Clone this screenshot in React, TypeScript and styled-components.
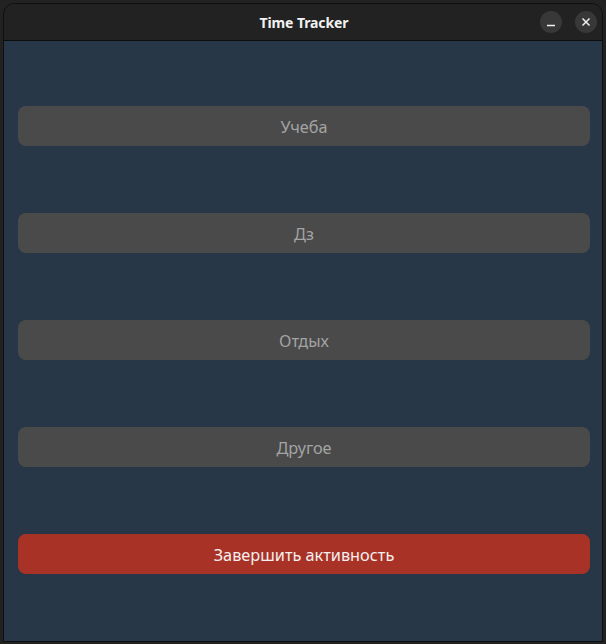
import React from "react";
import styled, { createGlobalStyle } from "styled-components";

const Global = createGlobalStyle`
  html, body { margin: 0; padding: 0; background: #232323; }
  body { font-family: "Noto Sans", "Open Sans", sans-serif; }
`;

const Desktop = styled.div`
  width: 606px;
  height: 644px;
  box-sizing: border-box;
  padding: 3px 3px 2px 3px;
  background: #222222;
`;

const Window = styled.div`
  width: 600px;
  height: 639px;
  box-sizing: border-box;
  border: 1px solid #0f0f0f;
  border-radius: 11px 11px 0 0;
  overflow: hidden;
  display: flex;
  flex-direction: column;
`;

const TitleBar = styled.div`
  height: 36px;
  flex: none;
  background: #222222;
  border-bottom: 1px solid #0c0c0c;
  position: relative;
  display: flex;
  align-items: center;
  justify-content: center;
`;

const Title = styled.div`
  color: #f2f2f2;
  font-family: "Noto Sans", "Open Sans", sans-serif;
  font-weight: 700;
  font-size: 14px;
  letter-spacing: -0.1px;
  padding-left: 2px;
`;

const Controls = styled.div`
  position: absolute;
  right: 5px;
  top: 7px;
  display: flex;
  gap: 13px;
`;

const CtrlBtn = styled.div`
  width: 22px;
  height: 22px;
  border-radius: 50%;
  background: #383838;
  display: flex;
  align-items: center;
  justify-content: center;
`;

const Content = styled.div`
  flex: 1;
  background: #283747;
  box-sizing: border-box;
  padding: 65px 12px 0 14px;
  display: flex;
  flex-direction: column;
  gap: 67px;
`;

const ActionButton = styled.div<{ $danger?: boolean }>`
  height: 40px;
  border-radius: 8px;
  background: ${(p) => (p.$danger ? "#a93226" : "#4a4a4a")};
  color: ${(p) => (p.$danger ? "#f4f0f0" : "#a3a3a3")};
  font-family: "Noto Sans", "Open Sans", sans-serif;
  font-size: 16.3px;
  display: flex;
  align-items: center;
  justify-content: center;
  padding-top: 1px;
  box-sizing: border-box;
`;

export default function App() {
  return (
    <>
      <Global />
      <Desktop>
        <Window>
          <TitleBar>
            <Title>Time Tracker</Title>
            <Controls>
              <CtrlBtn>
                <svg width="10" height="10" viewBox="0 0 10 10">
                  <line x1="1" y1="8.5" x2="9" y2="8.5" stroke="#f0f0f0" strokeWidth="1.4" />
                </svg>
              </CtrlBtn>
              <CtrlBtn>
                <svg width="10" height="10" viewBox="0 0 10 10">
                  <path d="M1.5 1.5 L8.5 8.5 M8.5 1.5 L1.5 8.5" stroke="#f0f0f0" strokeWidth="1.5" />
                </svg>
              </CtrlBtn>
            </Controls>
          </TitleBar>
          <Content>
            <ActionButton>Учеба</ActionButton>
            <ActionButton>Дз</ActionButton>
            <ActionButton>Отдых</ActionButton>
            <ActionButton>Другое</ActionButton>
            <ActionButton $danger>Завершить активность</ActionButton>
          </Content>
        </Window>
      </Desktop>
    </>
  );
}
